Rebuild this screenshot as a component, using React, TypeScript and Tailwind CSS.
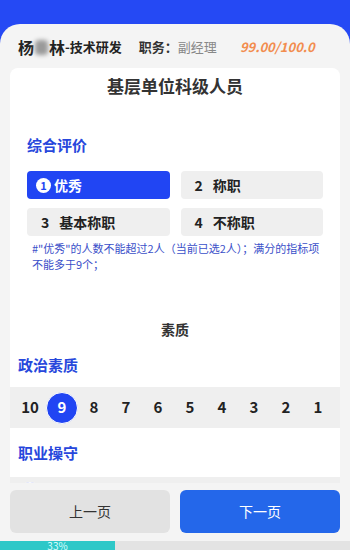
import React, { useState } from "react";

const scores = [10, 9, 8, 7, 6, 5, 4, 3, 2, 1];

const options = [
  { no: 1, label: "优秀" },
  { no: 2, label: "称职" },
  { no: 3, label: "基本称职" },
  { no: 4, label: "不称职" },
];

function ScoreRow({ value, clipped }: { value: number; clipped?: boolean }) {
  return (
    <div className="flex h-[41px] items-center bg-[#efefef] px-[4px]">
      {scores.map((s) => (
        <div key={s} className="flex w-[32px] items-center justify-center">
          {s === value ? (
            <span className="flex h-[32px] w-[32px] items-center justify-center rounded-full border border-white bg-[#2145f3] text-[15px] font-bold text-white">
              {!clipped && s}
            </span>
          ) : (
            !clipped && <span className="text-[15px] font-bold text-[#222]">{s}</span>
          )}
        </div>
      ))}
    </div>
  );
}

export default function App() {
  const [grade, setGrade] = useState(1);

  return (
    <div
      className="flex h-[550px] w-[350px] flex-col overflow-hidden bg-[#2549f4]"
      style={{ fontFamily: '"Noto Sans CJK SC", "Noto Sans", sans-serif' }}
    >
      <div className="mt-[24px] flex flex-1 flex-col rounded-t-[20px] bg-[#f4f4f4]">
        {/* header */}
        <div className="flex h-[44px] items-center pl-[18px] pt-[2px]">
          <span className="text-[16px] font-bold text-[#222]">杨</span>
          <span className="mx-[1px] h-[15px] w-[13px] rounded-sm bg-[#9a9a9a] blur-[2px]" />
          <span className="text-[16px] font-bold text-[#222]">林</span>
          <span className="text-[13px] font-bold text-[#222]">-技术研发</span>
          <span className="ml-[17px] text-[13px] font-bold text-[#333]">职务：</span>
          <span className="text-[13px] text-[#888]">副经理</span>
          <span className="ml-[23px] text-[13px] font-bold italic text-[#f28d4f]">99.00/100.0</span>
        </div>

        {/* card */}
        <div className="mx-[10px] h-[415px] overflow-hidden rounded-t-[8px] bg-white">
          <h1 className="pt-[6px] text-center text-[17px] leading-[24px] font-bold text-[#333]">
            基层单位科级人员
          </h1>

          <div className="px-[17px]">
            <h2 className="mt-[37px] text-[15px] leading-[20px] font-bold text-[#2747dc]">综合评价</h2>
            <div className="mt-[16px] grid grid-cols-2 gap-x-[11px] gap-y-[9px]">
              {options.map((o) =>
                o.no === grade ? (
                  <button
                    key={o.no}
                    onClick={() => setGrade(o.no)}
                    className="flex h-[28px] items-center rounded-[4px] bg-[#2145f3] pl-[9px] text-[14px] font-bold text-white"
                  >
                    <span className="mr-[3px] flex h-[15px] w-[15px] items-center justify-center rounded-full bg-white text-[11px] text-[#2145f3]">
                      {o.no}
                    </span>
                    {o.label}
                  </button>
                ) : (
                  <button
                    key={o.no}
                    onClick={() => setGrade(o.no)}
                    className="flex h-[28px] items-center rounded-[4px] bg-[#efefef] pl-[14px] text-[14px] font-bold text-[#222]"
                  >
                    <span className="mr-[10px]">{o.no}</span>
                    {o.label}
                  </button>
                )
              )}
            </div>
            <p className="mt-[4px] pl-[5px] text-[11px] leading-[16px] text-[#3a4fc9]">
              #"优秀"的人数不能超过2人（当前已选2人）；满分的指标项不能多于9个；
            </p>
          </div>

          <h3 className="mt-[47px] text-center text-[14px] leading-[20px] font-bold text-[#333]">素质</h3>

          <h2 className="mt-[16px] pl-[8px] text-[15px] leading-[20px] font-bold text-[#2747dc]">政治素质</h2>
          <div className="mt-[12px]">
            <ScoreRow value={9} />
          </div>

          <h2 className="mt-[15px] pl-[8px] text-[15px] leading-[20px] font-bold text-[#2747dc]">职业操守</h2>
          <div className="mt-[14px]">
            <ScoreRow value={10} clipped />
          </div>
        </div>

        {/* footer */}
        <div className="flex gap-[10px] px-[10px] pt-[7px] pb-[8px]">
          <button className="h-[43px] flex-1 rounded-[6px] bg-[#e2e2e2] text-[14px] text-[#333]">上一页</button>
          <button className="h-[43px] flex-1 rounded-[6px] bg-[#2467ea] text-[14px] text-white">下一页</button>
        </div>
        <div className="flex h-[9px] bg-[#e3e3e3]">
          <div className="flex w-[115px] items-center justify-center overflow-hidden bg-[#2ec8c8] text-[10px] leading-[9px] text-[#dff]">
            33%
          </div>
        </div>
      </div>
    </div>
  );
}
